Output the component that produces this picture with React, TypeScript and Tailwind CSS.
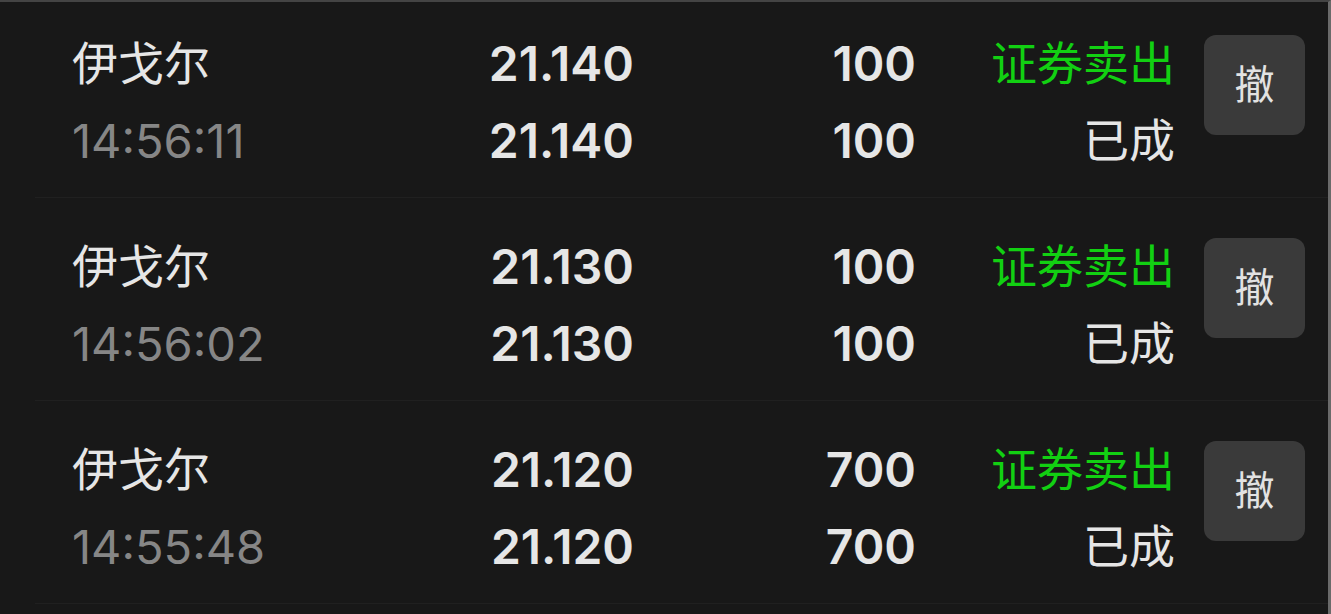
import React from 'react';

type Order = {
  name: string;
  time: string;
  orderPrice: string;
  dealPrice: string;
  orderQty: string;
  dealQty: string;
  side: string;
  status: string;
};

const orders: Order[] = [
  { name: '伊戈尔', time: '14:56:11', orderPrice: '21.140', dealPrice: '21.140', orderQty: '100', dealQty: '100', side: '证券卖出', status: '已成' },
  { name: '伊戈尔', time: '14:56:02', orderPrice: '21.130', dealPrice: '21.130', orderQty: '100', dealQty: '100', side: '证券卖出', status: '已成' },
  { name: '伊戈尔', time: '14:55:48', orderPrice: '21.120', dealPrice: '21.120', orderQty: '700', dealQty: '700', side: '证券卖出', status: '已成' },
];

const font = { fontFamily: 'Inter, "Noto Sans CJK SC", sans-serif' };

const OrderRow: React.FC<{ order: Order }> = ({ order }) => (
  <div className="ml-[35px] flex h-[203px] border-b border-[#202020] pl-[37px] pr-[23px]">
    <div className="w-[300px] pt-[30px] leading-[77px]">
      <div className="text-[46px] text-[#e6e6e6]">{order.name}</div>
      <div className="text-[47px] text-[#868686]">{order.time}</div>
    </div>
    <div className="w-[262px] pt-[30px] text-right text-[48px] font-semibold leading-[77px] text-[#e6e6e6]">
      <div>{order.orderPrice}</div>
      <div>{order.dealPrice}</div>
    </div>
    <div className="w-[282px] pt-[30px] text-right text-[48px] font-semibold leading-[77px] text-[#e6e6e6]">
      <div>{order.orderQty}</div>
      <div>{order.dealQty}</div>
    </div>
    <div className="w-[259px] pt-[30px] text-right text-[46px] leading-[77px]">
      <div className="text-[#12d012]">{order.side}</div>
      <div className="text-[#e6e6e6]">{order.status}</div>
    </div>
    <button className="ml-[29px] mt-[40px] flex h-[100px] w-[101px] items-center justify-center rounded-[12px] bg-[#3a3a3a] text-[40px] text-[#e2e2e2]">
      撤
    </button>
  </div>
);

export default function App() {
  return (
    <div
      style={font}
      className="h-[614px] w-full overflow-hidden border-t-2 border-r-[3px] border-t-[#444444] border-r-[#6a6a6a] bg-[#181818]"
    >
      <div className="-mt-[7px]">
        {orders.map((o, i) => (
          <OrderRow key={i} order={o} />
        ))}
      </div>
    </div>
  );
}
